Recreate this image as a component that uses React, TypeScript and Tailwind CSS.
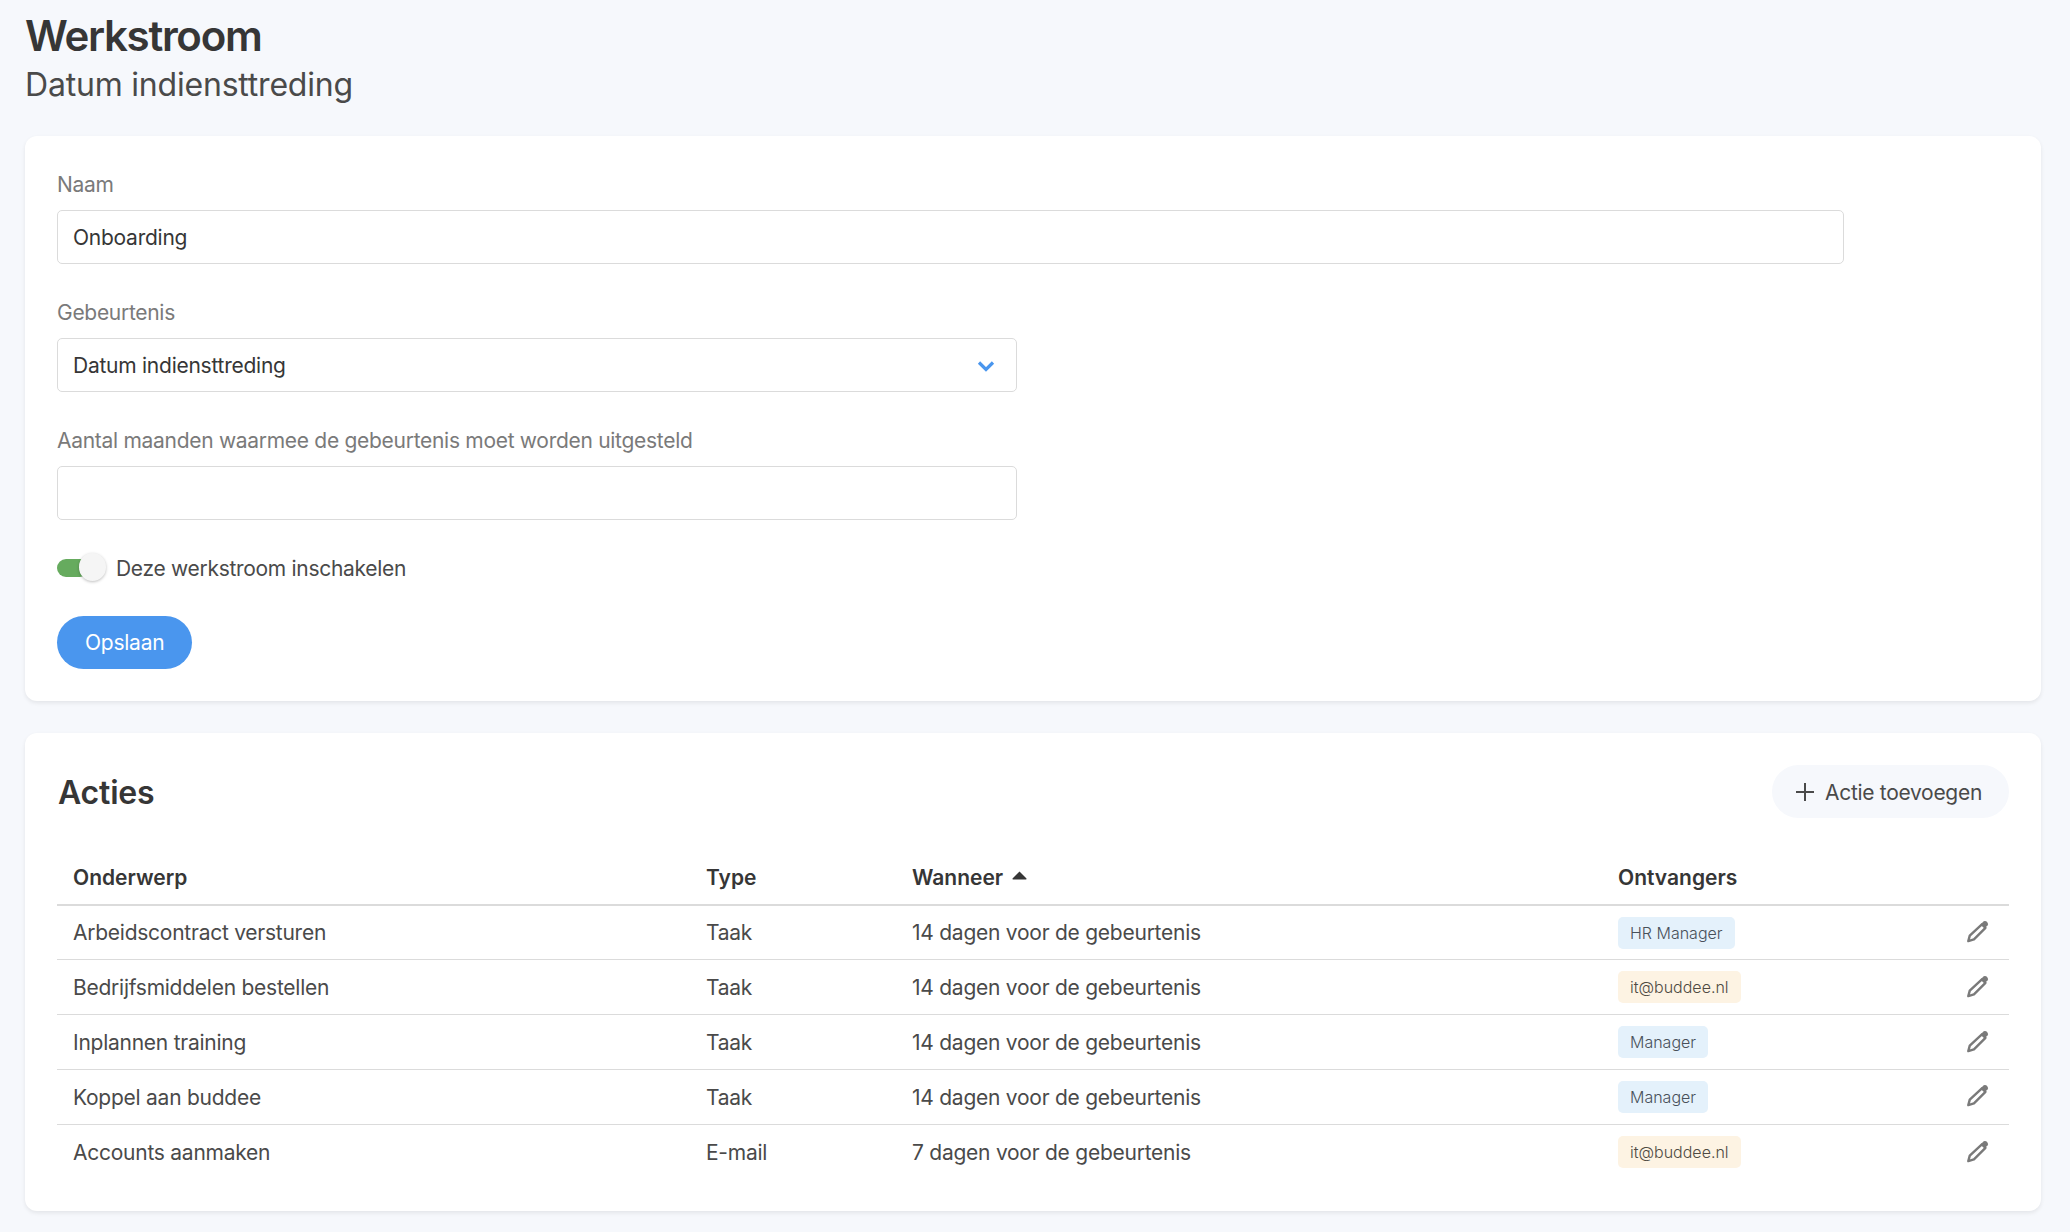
import { ReactNode } from 'react';

const rows = [
  { subject: 'Arbeidscontract versturen', type: 'Taak', when: '14 dagen voor de gebeurtenis', to: 'HR Manager', mail: false },
  { subject: 'Bedrijfsmiddelen bestellen', type: 'Taak', when: '14 dagen voor de gebeurtenis', to: 'it@buddee.nl', mail: true },
  { subject: 'Inplannen training', type: 'Taak', when: '14 dagen voor de gebeurtenis', to: 'Manager', mail: false },
  { subject: 'Koppel aan buddee', type: 'Taak', when: '14 dagen voor de gebeurtenis', to: 'Manager', mail: false },
  { subject: 'Accounts aanmaken', type: 'E-mail', when: '7 dagen voor de gebeurtenis', to: 'it@buddee.nl', mail: true },
];

function Field({ label, children, className }: { label: string; children: ReactNode; className: string }) {
  return (
    <div className={className}>
      <label className="block h-[26px] text-[21px] leading-[26px] tracking-[-0.29px] text-[#7a7a7a]">{label}</label>
      <div className="mt-[12px] flex h-[54px] items-center justify-between rounded-[5px] border border-[#dbdbdb] bg-white pl-[15px] pr-[21px] pt-[2px] text-[21px] tracking-[-0.25px] text-[#363636]">
        {children}
      </div>
    </div>
  );
}

function Pencil() {
  return (
    <svg width="23" height="23" viewBox="0 0 22 22" className="mb-[2px] text-[#7a7a7a]">
      <path d="M15.2 4.2 L18.6 7.6 L7.6 18.6 L2.2 20.2 L3.6 15 Z" fill="none" stroke="currentColor" strokeWidth="2.3" strokeLinejoin="round" />
      <path d="M14.6 3.6 L16.9 1.3 Q18 0.4 19.4 1.3 L20.7 2.6 Q21.6 4 20.7 5.1 L18.4 7.4 Z" fill="currentColor" />
    </svg>
  );
}

export default function App() {
  return (
    <div className="min-h-[1232px] bg-[#f6f8fc] pl-[25px] pr-[29px] font-['Inter',sans-serif] text-[#363636]">
      <h1 className="pt-[9px] text-[42px] leading-[54px] font-semibold tracking-[-1.3px] text-[#363636]">Werkstroom</h1>
      <h2 className="mt-[2px] text-[32px] leading-[40px] tracking-[-0.2px] text-[#4a4a4a]">Datum indiensttreding</h2>

      <div className="mt-[31px] h-[565px] rounded-[12px] bg-white pl-[32px] pr-[32px] pt-[36px] shadow-[0_2px_4px_rgba(10,10,10,0.08)]">
        <Field label="Naam" className="w-[1787px]">
          <span>Onboarding</span>
        </Field>
        <Field label="Gebeurtenis" className="mt-[36px] w-[960px]">
          <span>Datum indiensttreding</span>
          <svg width="18" height="12" viewBox="0 0 18 12" fill="none" className="text-[#4a96ee]">
            <path d="M2 2.5 L9 9.5 L16 2.5" stroke="currentColor" strokeWidth="3.2" />
          </svg>
        </Field>
        <Field label="Aantal maanden waarmee de gebeurtenis moet worden uitgesteld" className="mt-[36px] w-[960px]">
          <span />
        </Field>

        <div className="mt-[35px] flex h-[28px] items-center">
          <div className="relative mb-[2px] h-[18px] w-[48px]">
            <div className="h-[18px] w-[32px] rounded-full bg-[#66ab5e]" />
            <div className="absolute left-[22px] top-[-6px] h-[28px] w-[27px] rounded-full bg-[#f5f5f5] shadow-[0_1px_3px_rgba(0,0,0,0.25)]" />
          </div>
          <span className="ml-[11px] text-[21px] tracking-[-0.3px] text-[#4a4a4a]">Deze werkstroom inschakelen</span>
        </div>

        <button className="mt-[33px] h-[53px] rounded-full bg-[#4a96ee] px-[28px] text-[21px] tracking-[-0.25px] text-white">Opslaan</button>
      </div>

      <div className="mt-[32px] h-[478px] rounded-[12px] bg-white pl-[32px] pr-[32px] pt-[32px] shadow-[0_2px_4px_rgba(10,10,10,0.08)]">
        <div className="flex h-[53px] items-center justify-between">
          <h3 className="pl-[1px] pt-[2px] text-[32px] font-semibold tracking-[-0.2px] text-[#363636]">Acties</h3>
          <button className="flex h-[53px] items-center rounded-full bg-[#f6f8fc] pl-[24px] pr-[27px] text-[21px] tracking-[-0.3px] text-[#4a4a4a]">
            <svg width="18" height="18" viewBox="0 0 18 18" className="mr-[11px] text-[#4a4a4a]">
              <path d="M9 0 V18 M0 9 H18" stroke="currentColor" strokeWidth="2" />
            </svg>
            <span className="pt-[2px]">Actie toevoegen</span>
          </button>
        </div>

        <table className="mt-[32px] w-[1952px] table-fixed border-collapse text-[21px]">
          <colgroup>
            <col className="w-[633px]" />
            <col className="w-[206px]" />
            <col className="w-[706px]" />
            <col className="w-[407px]" />
          </colgroup>
          <thead>
            <tr className="h-[55px] border-b-2 border-[#dbdbdb] text-left">
              <th className="pl-[16px] pt-[2px] font-semibold">Onderwerp</th>
              <th className="pl-[16px] pt-[2px] font-semibold">Type</th>
              <th className="pl-[16px] pt-[2px] font-semibold">
                <span className="inline-flex items-center">
                  Wanneer
                  <svg width="15" height="9" viewBox="0 0 15 9" className="mb-[6px] ml-[9px] text-[#363636]">
                    <path d="M7.5 0.5 L14.5 7.5 Q14.6 8.5 13.5 8.5 H1.5 Q0.4 8.5 0.5 7.5 Z" fill="currentColor" />
                  </svg>
                </span>
              </th>
              <th className="pl-[16px] pt-[2px] font-semibold">Ontvangers</th>
            </tr>
          </thead>
          <tbody className="tracking-[-0.25px] text-[#4a4a4a]">
            {rows.map((row, i) => (
              <tr key={row.subject} className={i < rows.length - 1 ? 'h-[54.85px] border-b border-[#dbdbdb]' : 'h-[54.85px]'}>
                <td className="pl-[16px] pt-[1px]">{row.subject}</td>
                <td className="pl-[16px] pt-[1px]">{row.type}</td>
                <td className="pl-[16px] pt-[1px]">{row.when}</td>
                <td className="pl-[16px]">
                  <div className="flex items-center justify-between pr-[20px]">
                    <span
                      className={
                        row.mail
                          ? 'rounded-[5px] bg-[#fdf3e3] px-[12px] text-[16px] leading-[32px] font-light tracking-normal text-[#4f4a42]'
                          : 'rounded-[5px] bg-[#e4f1fb] px-[12px] text-[16px] leading-[32px] font-light tracking-normal text-[#48505a]'
                      }
                    >
                      {row.to}
                    </span>
                    <Pencil />
                  </div>
                </td>
              </tr>
            ))}
          </tbody>
        </table>
      </div>
    </div>
  );
}
